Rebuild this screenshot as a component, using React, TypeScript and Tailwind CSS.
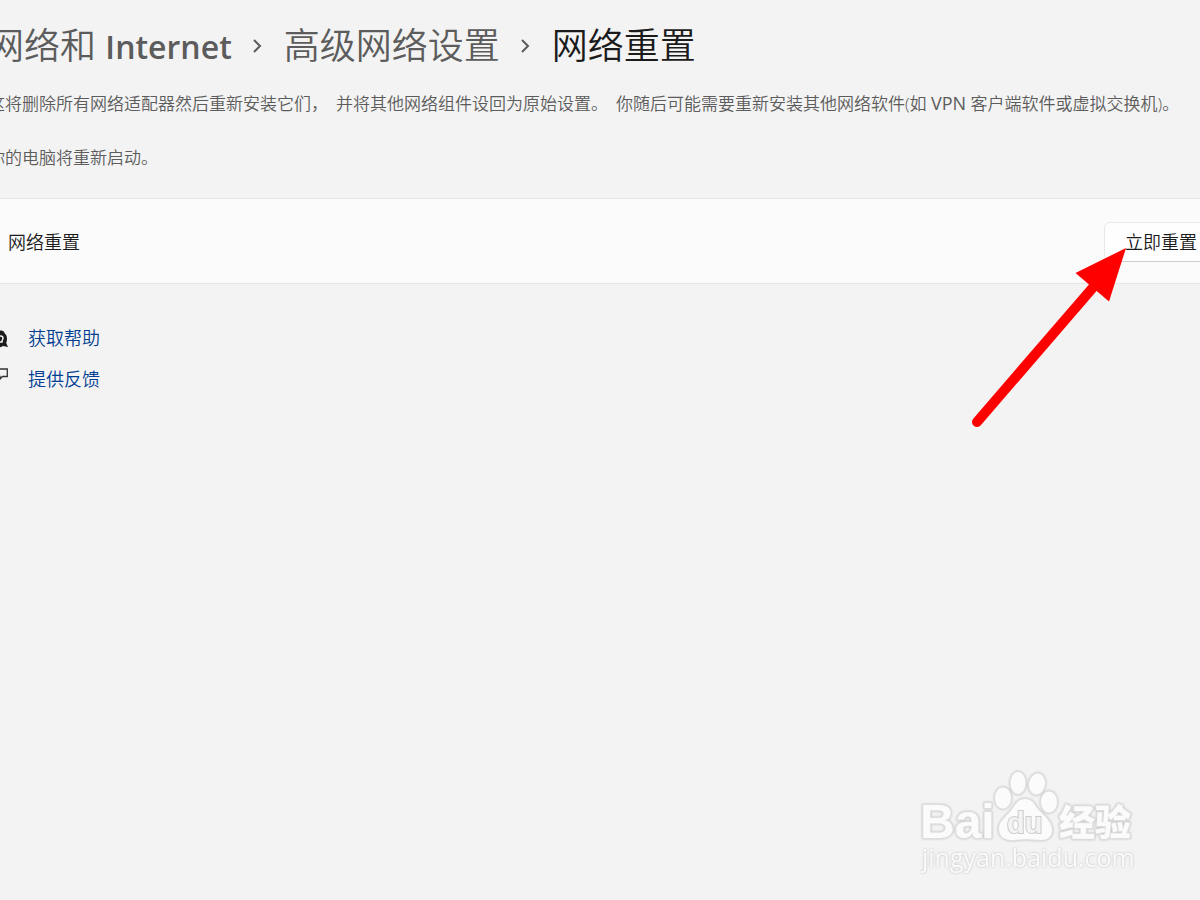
import type { ReactNode } from "react";

const CJK = "font-['Open_Sans','Noto_Sans_CJK_SC',sans-serif]";

function Separator() {
  return (
    <svg width="12" height="18" viewBox="0 0 12 18" fill="none" aria-hidden="true">
      <path d="M2 3 L8 9 L2 15" stroke="#5c5c5c" strokeWidth="2" />
    </svg>
  );
}

function HelpIcon() {
  return (
    <svg width="20" height="24" viewBox="0 0 20 24" aria-hidden="true">
      <path
        d="M9 3.500h4c2 0 3.200 1.200 3.800 3c1.600 1.200 2.200 3 2.200 5.500c0 1.500-.3 2.800-.8 4L20 20l-5-1c-2 1.200-4 1.500-6 1.500c-5 0-7-3-7-7.500C2 7 5 3.500 9 3.500Z"
        fill="#1b1b1b"
      />
      <path
        d="M10 10c1.500-1.500 5-1.500 5 1c0 1.500-1 1.600-1 4H10"
        fill="none"
        stroke="#f3f3f3"
        strokeWidth="1.500"
      />
    </svg>
  );
}

function FeedbackIcon() {
  return (
    <svg width="20" height="24" viewBox="0 0 20 24" fill="none" aria-hidden="true">
      <path d="M7 1H19.300V8.500H14.500L12 11V8.500H10" stroke="#333333" strokeWidth="1.300" />
    </svg>
  );
}

function HelpLink({ icon, children }: { icon: ReactNode; children: ReactNode }) {
  return (
    <a href="#" className="flex h-[41px] items-center gap-5 text-[18px] font-[350] text-[#003e92]">
      {icon}
      {children}
    </a>
  );
}

function Arrow() {
  return (
    <svg
      className="pointer-events-none absolute top-[240px] right-[60px]"
      width="180"
      height="200"
      viewBox="960 240 180 200"
      aria-hidden="true"
    >
      <path d="M977 422 L1096 284" stroke="#ff0000" strokeWidth="10" strokeLinecap="round" />
      <path d="M1126 248 L1075.500 273 L1109 301.500Z" fill="#ff0000" />
    </svg>
  );
}

function Watermark() {
  return (
    <svg
      className="pointer-events-none absolute right-[50px] bottom-[20px] drop-shadow-[0_0_1px_#bcbcbc]"
      width="250"
      height="120"
      viewBox="900 760 250 120"
      fill="#fbfbfb"
      stroke="#dedede"
      strokeWidth="2"
      paintOrder="stroke"
    >
      <text x="920" y="838" fontSize="48" fontWeight="700" fontFamily="Liberation Sans, sans-serif">
        Bai
      </text>
      <ellipse cx="1003" cy="798" rx="8" ry="10.500" />
      <ellipse cx="1018" cy="783" rx="7.500" ry="11" />
      <ellipse cx="1037" cy="784" rx="8" ry="10.500" transform="rotate(12 1037 784)" />
      <ellipse cx="1049" cy="802" rx="8" ry="10.500" />
      <path d="M1025 799c6 0 9 4 12 9c4 6 15 12 15 22c0 7-5 10-11 10c-6 0-9-1-15-1s-9 1-15 1c-7 0-12-4-12-11c0-9 9-13 14-21c3-5 6-9 12-9Z" />
      <text
        x="1007"
        y="833"
        fontSize="29"
        fontWeight="700"
        fontFamily="Liberation Sans, sans-serif"
        fill="#f3f3f3"
        stroke="#cccccc"
      >
        du
      </text>
      <text x="1059" y="836" fontSize="36" fontWeight="900" fontFamily="Noto Sans CJK SC, sans-serif">
        经验
      </text>
      <text x="922" y="867" fontSize="25" fontWeight="500" fontFamily="Open Sans, sans-serif" strokeWidth="0">
        jingyan.baidu.com
      </text>
    </svg>
  );
}

export default function App() {
  return (
    <div className={`relative min-h-screen overflow-hidden bg-[#f3f3f3] text-[#1b1b1b] ${CJK}`}>
      <main className="-ml-3 -mr-[18px] pt-5">
        <nav aria-label="面包屑">
          <ol className="flex h-[52px] items-center whitespace-nowrap text-[36px] font-[350] text-[#5c5c5c]">
            <li>
              <a href="#">
                网络和 <span className="text-[32px] font-semibold">Internet</span>
              </a>
            </li>
            <li className="mx-5">
              <Separator />
            </li>
            <li>
              <a href="#">高级网络设置</a>
            </li>
            <li className="mx-5">
              <Separator />
            </li>
            <li>
              <h1 aria-current="page" className="text-[#1b1b1b]">
                网络重置
              </h1>
            </li>
          </ol>
        </nav>

        <div className="mt-[18px] text-[17px] leading-[27px] font-[350] text-[#5c5c5c]">
          <p className="flex gap-2 whitespace-nowrap">
            <span>这将删除所有网络适配器然后重新安装它们，</span>
            <span>并将其他网络组件设回为原始设置。</span>
            <span>
              你随后可能需要重新安装其他网络软件(如 <span className="text-[18px] font-normal">VPN</span>{" "}
              客户端软件或虚拟交换机)。
            </span>
          </p>
          <p className="mt-[27px]">你的电脑将重新启动。</p>
        </div>

        <section className="mt-[27px] flex h-[86px] items-center justify-between border-y border-[#e5e5e5] bg-[#fbfbfb] pt-[2px] pl-5 text-[18px] font-[350]">
          <h2>网络重置</h2>
          <button
            type="button"
            className="h-10 rounded-md border border-[#e9e9e9] border-b-[#cccccc] bg-[#fefefe] px-5"
          >
            立即重置
          </button>
        </section>

        <div className="mt-[34px]">
          <HelpLink icon={<HelpIcon />}>获取帮助</HelpLink>
          <HelpLink icon={<FeedbackIcon />}>提供反馈</HelpLink>
        </div>
      </main>

      <Arrow />
      <Watermark />
    </div>
  );
}
